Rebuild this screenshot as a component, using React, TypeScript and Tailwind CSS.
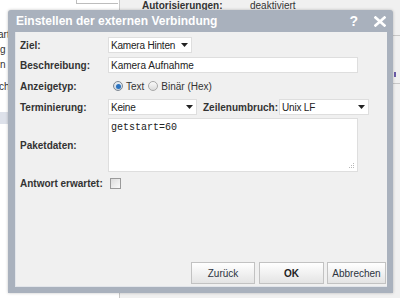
import React from "react";

const SelectBox = ({ value, className }: { value: string; className: string }) => (
  <div
    className={`flex h-4 items-center justify-between border border-[#dedede] bg-white pl-[2px] pr-[3px] text-[10px] text-[#222] ${className}`}
  >
    <span className="tracking-[-0.2px]">{value}</span>
    <svg width="7" height="4" viewBox="0 0 7 4">
      <path d="M0 0h7L3.5 4z" fill="#222" />
    </svg>
  </div>
);

const Radio = ({ checked }: { checked?: boolean }) => (
  <span
    className={`flex h-[10px] w-[10px] items-center justify-center rounded-full border ${
      checked ? "border-[#7d8792] bg-gradient-to-b from-[#e8eef4] to-[#c9d3dd]" : "border-[#a8a8a8] bg-gradient-to-b from-[#fafafa] to-[#dcdcdc]"
    }`}
  >
    {checked && <span className="h-[5px] w-[5px] rounded-full bg-[#2a73c0]" />}
  </span>
);

const DialogButton = ({ label, className }: { label: string; className: string }) => (
  <button
    type="button"
    className={`h-[22px] border border-[#c2c2c2] bg-gradient-to-b from-[#ffffff] to-[#e4e4e4] text-[10px] text-[#2c3440] ${className}`}
  >
    {label}
  </button>
);

export default function App() {
  return (
    <div className="relative h-[298px] w-[400px] overflow-hidden bg-[#f0f0f0] font-['Liberation_Sans',Arial,sans-serif] text-[10px] text-[#333]">
      {/* page behind the dialog */}
      <div className="flex h-full">
        <div className="flex h-full w-[120px] flex-col border-r border-[#c8c8c8] bg-white">
          <div className="ml-[76px] h-[4px] w-[42px] border-b border-l border-[#bdbdbd]" />
          <div className="mt-[25px] flex flex-col gap-[4px] leading-[11px]">
            <span className="-ml-[2px]">artikel</span>
            <span>g</span>
            <span>n</span>
            <span className="mt-[7px] -ml-[1px]">ch</span>
          </div>
          <div className="mt-[20px] h-[12px] bg-[#dde1ea]" />
        </div>
        <div className="flex flex-1 flex-col">
          <div className="flex h-[12px] items-center pl-[22px] leading-none">
            <span className="w-[108px] font-bold">Autorisierungen:</span>
            <span>deaktiviert</span>
          </div>
          <div className="mt-[23px] ml-auto h-px w-[8px] bg-[#c8c8c8]" />
          <div className="mt-[36px] ml-auto mr-[4px] h-[5px] w-[2px] bg-[#6b5ca8]" />
          <div className="mt-[6px] ml-auto h-px w-[8px] bg-[#c8c8c8]" />
        </div>
      </div>

      {/* dialog */}
      <div className="absolute top-[10px] left-[8px] flex h-[283px] w-[385px] flex-col rounded-t-[3px] bg-[#a9b1bd] pr-[6px] pb-[6px] pl-[7px] shadow-[0_0_3px_rgba(0,0,0,0.25)]">
        <div className="flex h-[22px] items-center pl-[1px] text-white">
          <span className="text-[12px] font-bold">Einstellen der externen Verbindung</span>
          <span className="ml-auto text-[14px] font-bold">?</span>
          <svg className="mr-[1px] ml-[16px]" width="12" height="11" viewBox="0 0 12 11">
            <path d="M1.5 1.5l9 8M10.5 1.5l-9 8" stroke="#fff" strokeWidth="2.6" strokeLinecap="square" />
          </svg>
        </div>

        <div className="flex flex-1 flex-col border-b border-l border-[#e2e5ea] bg-[#f0f0f0] pl-[4px]">
          <div className="mt-[5px] flex h-4 items-center">
            <span className="w-[88px] font-bold">Ziel:</span>
            <SelectBox value="Kamera Hinten" className="w-[84px]" />
          </div>

          <div className="mt-[4px] flex h-4 items-center">
            <span className="w-[88px] font-bold">Beschreibung:</span>
            <div className="flex h-4 w-[250px] items-center border border-[#dedede] bg-white pl-[2px] text-[#222]">
              Kamera Aufnahme
            </div>
          </div>

          <div className="mt-[4px] flex h-[18px] items-center">
            <span className="w-[93px] font-bold">Anzeigetyp:</span>
            <Radio checked />
            <span className="mr-[4px] ml-[3px]">Text</span>
            <Radio />
            <span className="ml-[3px]">Binär (Hex)</span>
          </div>

          <div className="mt-[4px] flex h-4 items-center">
            <span className="w-[88px] font-bold">Terminierung:</span>
            <SelectBox value="Keine" className="w-[89px]" />
            <span className="ml-[6px] w-[76px] font-bold">Zeilenumbruch:</span>
            <SelectBox value="Unix LF" className="w-[90px]" />
          </div>

          <div className="mt-[3px] flex h-[54px] items-center">
            <span className="w-[88px] font-bold">Paketdaten:</span>
            <div className="relative h-[54px] w-[250px] border border-[#dedede] bg-white px-[2px] pt-[3px] font-['Liberation_Mono','Courier_New',monospace] text-[10px] leading-[12px] text-[#222]">
              getstart=60
              <svg className="absolute right-[2px] bottom-[2px]" width="6" height="6" viewBox="0 0 6 6">
                <g fill="#b8b8b8">
                  <rect x="4" y="0" width="1" height="1" />
                  <rect x="2" y="2" width="1" height="1" />
                  <rect x="4" y="2" width="1" height="1" />
                  <rect x="0" y="4" width="1" height="1" />
                  <rect x="2" y="4" width="1" height="1" />
                  <rect x="4" y="4" width="1" height="1" />
                </g>
              </svg>
            </div>
          </div>

          <div className="mt-[5px] flex h-[13px] items-center">
            <span className="w-[90px] font-bold">Antwort erwartet:</span>
            <span className="h-[11px] w-[11px] border border-[#9a9a9a] bg-gradient-to-br from-[#dcdcdc] to-[#fafafa]" />
          </div>

          <div className="mt-auto mb-[2px] flex justify-end pr-[1px]">
            <DialogButton label="Zurück" className="w-[64px]" />
            <DialogButton label="OK" className="ml-[4px] w-[65px] font-bold text-[#222]" />
            <DialogButton label="Abbrechen" className="ml-[3px] w-[59px]" />
          </div>
        </div>
      </div>
    </div>
  );
}
